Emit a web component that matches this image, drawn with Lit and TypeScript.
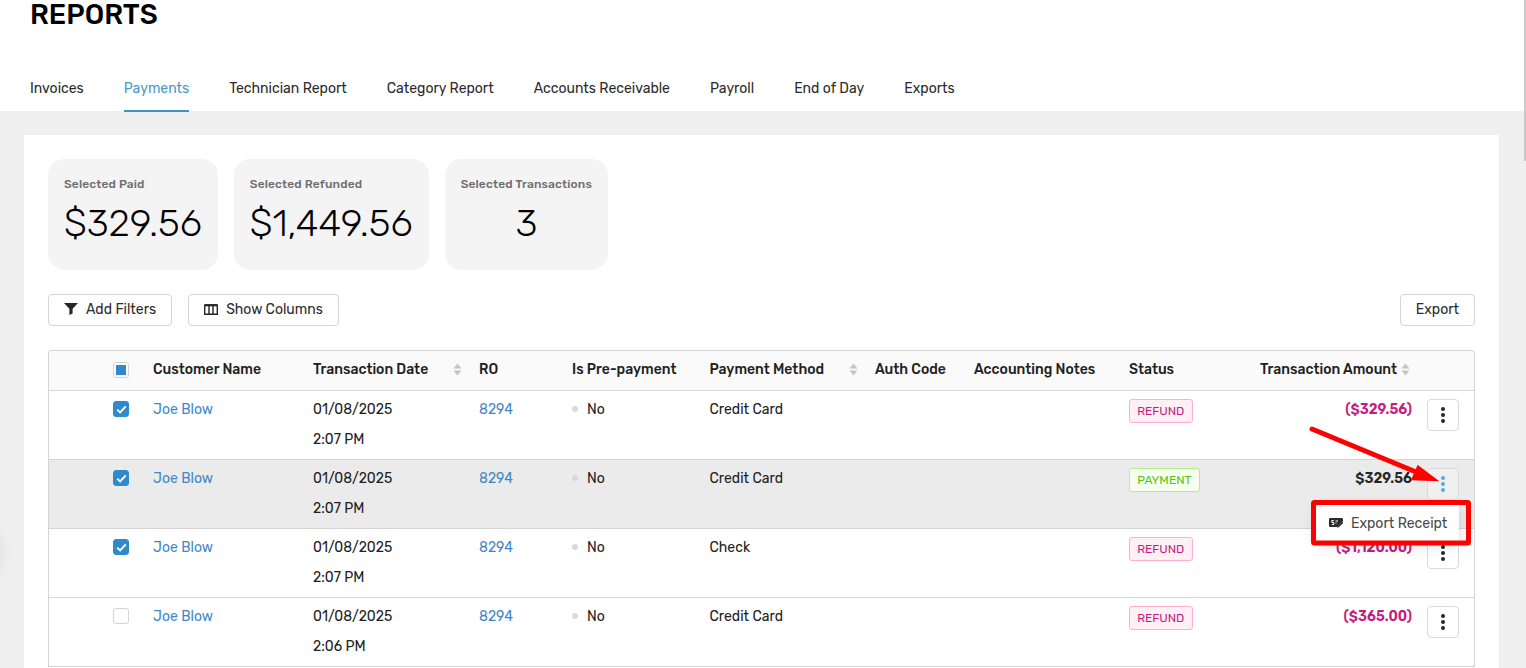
import { LitElement, html, css, svg } from "lit";
import { customElement } from "lit/decorators.js";

const tabs = ["Invoices", "Payments", "Technician Report", "Category Report", "Accounts Receivable", "Payroll", "End of Day", "Exports"];
const rows = [
  { on: true, time: "2:07 PM", method: "Credit Card", status: "REFUND", amt: "($329.56)" },
  { on: true, time: "2:07 PM", method: "Credit Card", status: "PAYMENT", amt: "$329.56", hover: true },
  { on: true, time: "2:07 PM", method: "Check", status: "REFUND", amt: "($1,120.00)" },
  { on: false, time: "2:06 PM", method: "Credit Card", status: "REFUND", amt: "($365.00)" },
];

const sort = html`<svg class="sort" width="9" height="13" viewBox="0 0 9 13"><path d="M4.500 0.500 8.500 5.500H.5Z M4.500 12.500 .5 7.500H8.500Z" fill="#c4c4c4"/></svg>`;

@customElement("app-root")
export class AppRoot extends LitElement {
  static styles = css`
    :host { display: block; width: 1526px; height: 668px; overflow: hidden; position: relative; background: #efefef;
      font-family: "Rubik", "Inter", "Roboto", sans-serif; font-size: 14px; color: #212121; }
    * { box-sizing: border-box; }
    .head { background: #fff; height: 111px; padding: 0 30px; display: flex; flex-direction: column; }
    h1 { margin: 0; font-size: 28px; line-height: 30px; font-weight: 500; color: #000; height: 77px; }
    .tabs { display: flex; gap: 40px; height: 35px; }
    .tab { height: 36px; padding-top: 3px; line-height: 20px; white-space: nowrap; position: relative; color: #2b2b2b; }
    .tab.active { color: #4a9ac4; border-bottom: 2px solid #3f95bf; }
    .main { padding: 24px 27px 0 24px; }
    .card { background: #fff; padding: 24px; height: 600px; }
    .stats { display: flex; gap: 16px; }
    .stat { background: #f4f4f4; border-radius: 16px; height: 111px; padding: 17px 16px 0; display: flex; flex-direction: column; }
    .stat .l { font-size: 12px; line-height: 16px; font-weight: 500; color: #6e6e6e; white-space: nowrap; letter-spacing: 0.13px; }
    .stat .v { font-size: 38px; line-height: 46px; margin-top: 8px; font-weight: 300; color: #000; white-space: nowrap; }
    .stat.c { align-items: center; }
    .toolbar { display: flex; gap: 16px; margin-top: 24px; height: 32px; }
    .btn { height: 32px; border: 1px solid #d4d4d4; border-radius: 4px; background: #fff; display: flex; align-items: center; gap: 8px; padding: 0 15px 2px; color: #2b2b2b; white-space: nowrap; }
    .btn.end { margin-left: auto; }
    .table { margin-top: 24px; border: 1px solid #d4d4d4; border-bottom: 0; border-radius: 4px 4px 0 0; }
    .row { display: grid; grid-template-columns: 64px 40px 160px 166px 93px 137.5px 165.5px 99px 155px 130.5px 152.5px 1fr; height: 69px; border-bottom: 1px solid #d4d4d4; }
    .row.th { height: 40px; background: #fafafa; align-items: center; font-weight: 500; border-radius: 4px 4px 0 0; padding-bottom: 2px; }
    .row.hover { background: #ebebeb; }
    .row > div { white-space: nowrap; min-width: 0; }
    .td { padding-top: 9px; line-height: 20px; }
    .date { line-height: 30px; padding-top: 4px; }
    .box { width: 16px; height: 16px; border-radius: 3px; border: 1px solid #d4d4d4; background: #fff; display: flex; align-items: center; justify-content: center; }
    .box.on { background: #2f89cd; border-color: #2f89cd; }
    .box i { display: block; width: 10px; height: 10px; background: #2f89cd; }
    .boxcell { padding-top: 10px; }
    .th .boxcell { padding-top: 0; }
    .link { color: #3f87c9; }
    .sp { display: flex; align-items: center; justify-content: space-between; padding-right: 17px; }
    .dot { display: inline-block; width: 6px; height: 6px; border-radius: 50%; background: #d9d9d9; margin-right: 9px; vertical-align: 2px; }
    .td.status { padding-top: 8px; }
    .tag { display: inline-block; height: 24px; line-height: 22px; font-size: 12px; padding: 0 7.2px; border-radius: 3px; border: 1px solid #ffadd2; background: #fff0f6; color: #c41d7f; }
    .tag.PAYMENT { border-color: #b7eb8f; background: #f6ffed; color: #52c41a; }
    .amt { text-align: right; font-weight: 600; color: #c41d7f; padding-top: 9px; line-height: 20px; }
    .amt.pos { color: #262626; }
    .row.th .amthead { font-weight: 500; display: flex; gap: 4px; justify-content: flex-end; align-items: center; padding-right: 2px; }
    .act { padding: 8px 0 0 15px; }
    .kebab { width: 32px; height: 32px; border: 1px solid #d9d9d9; border-radius: 4px; background: #fff; display: flex; flex-direction: column; align-items: center; justify-content: center; gap: 2px; }
    .kebab i { display: block; width: 4px; height: 4px; border-radius: 50%; background: #262626; }
    .kebab.on { background: #f0f0f0; }
    .kebab.on i { background: #5aa9dc; }
    .menu { position: absolute; left: 1316px; top: 505px; width: 143px; height: 37px; background: #fff; border-radius: 2px; box-shadow: 0 3px 14px rgba(0,0,0,.16); display: flex; align-items: center; gap: 8px; padding-left: 13px; color: #4a4a4a; white-space: nowrap; }
    .mark { position: absolute; left: 0; top: 0; pointer-events: none; }
    .scroll { position: absolute; right: 0; top: 0; width: 2px; height: 161px; background: #c9c9c9; }
    .edge { position: absolute; left: -16px; top: 534px; width: 16px; height: 38px; border-radius: 50%; box-shadow: 0 0 12px 2px rgba(0,0,0,.07); }
  `;

  render() {
    return html`
      <div class="head">
        <h1>REPORTS</h1>
        <div class="tabs">${tabs.map((t) => html`<div class="tab ${t === "Payments" ? "active" : ""}">${t}</div>`)}</div>
      </div>
      <div class="main">
        <div class="card">
          <div class="stats">
            <div class="stat"><div class="l">Selected Paid</div><div class="v">$329.56</div></div>
            <div class="stat"><div class="l">Selected Refunded</div><div class="v">$1,449.56</div></div>
            <div class="stat c"><div class="l">Selected Transactions</div><div class="v">3</div></div>
          </div>
          <div class="toolbar">
            <div class="btn">
              <svg width="14" height="12" viewBox="0 0 14 12"><path d="M0 0H14L8.600 5.800V10.600L5.400 12V5.800Z" fill="#262626"/></svg>
              Add Filters
            </div>
            <div class="btn">
              <svg width="14" height="11" viewBox="0 0 14 11" fill="none" stroke="#262626" stroke-width="1.4"><path d="M.7 1.200H13.300V10.300H.7ZM5 1.200V10.300M9 1.200V10.300"/><path d="M.7 1.200H13.300" stroke-width="2.200"/></svg>
              Show Columns
            </div>
            <div class="btn end">Export</div>
          </div>
          <div class="table">
            <div class="row th">
              <div></div>
              <div class="boxcell"><div class="box"><i></i></div></div>
              <div>Customer Name</div>
              <div class="sp">Transaction Date ${sort}</div>
              <div>RO</div>
              <div>Is Pre-payment</div>
              <div class="sp">Payment Method ${sort}</div>
              <div>Auth Code</div>
              <div>Accounting Notes</div>
              <div>Status</div>
              <div class="amthead">Transaction Amount ${sort}</div>
              <div></div>
            </div>
            ${rows.map((r) => html`
              <div class="row ${r.hover ? "hover" : ""}">
                <div></div>
                <div class="boxcell"><div class="box ${r.on ? "on" : ""}">
                  ${r.on ? html`<svg width="11" height="9" viewBox="0 0 11 9"><path d="M1.200 4.600 4.100 7.400 9.800 1.400" fill="none" stroke="#fff" stroke-width="2"/></svg>` : ""}
                </div></div>
                <div class="td link">Joe Blow</div>
                <div class="date">01/08/2025<br />${r.time}</div>
                <div class="td link">8294</div>
                <div class="td"><span class="dot"></span>No</div>
                <div class="td">${r.method}</div>
                <div></div>
                <div></div>
                <div class="td status"><span class="tag ${r.status}">${r.status}</span></div>
                <div class="amt ${r.status === "PAYMENT" ? "pos" : ""}">${r.amt}</div>
                <div class="act"><div class="kebab ${r.hover ? "on" : ""}"><i></i><i></i><i></i></div></div>
              </div>`)}
          </div>
        </div>
      </div>
      <div class="menu">
        <svg width="14" height="11" viewBox="0 0 14 11"><path d="M0 1.200Q0 0 1.200 0H12.800Q14 0 14 1.200V3L8.500 8.500V9H1.200Q0 9 0 7.800Z" fill="#2b2b2b"/><path d="M8 10 9 7.800 13.500 3.500 14.500 4.700 10 9Z" fill="#2b2b2b"/><path d="M4.800 2.500H2.800V4.500H4.800V6.500H2.800M6.500 3H9M6.500 5H7.500" fill="none" stroke="#fff"/></svg>
        Export Receipt
      </div>
      <div class="edge"></div>
      <div class="scroll"></div>
      <svg class="mark" width="1526" height="668" viewBox="0 0 1526 668">
        ${svg`<path d="M1312 429 1416 472" stroke="#f00" stroke-width="5" stroke-linecap="round" fill="none"/>
        <path d="M1418 466 1437 480.500 1412 479.500Z" fill="#f00" stroke="#f00" stroke-width="1.500"/>
        <rect x="1313.500" y="502.500" width="155" height="40.500" rx="1" fill="none" stroke="#f00" stroke-width="5"/>`}
      </svg>
    `;
  }
}
